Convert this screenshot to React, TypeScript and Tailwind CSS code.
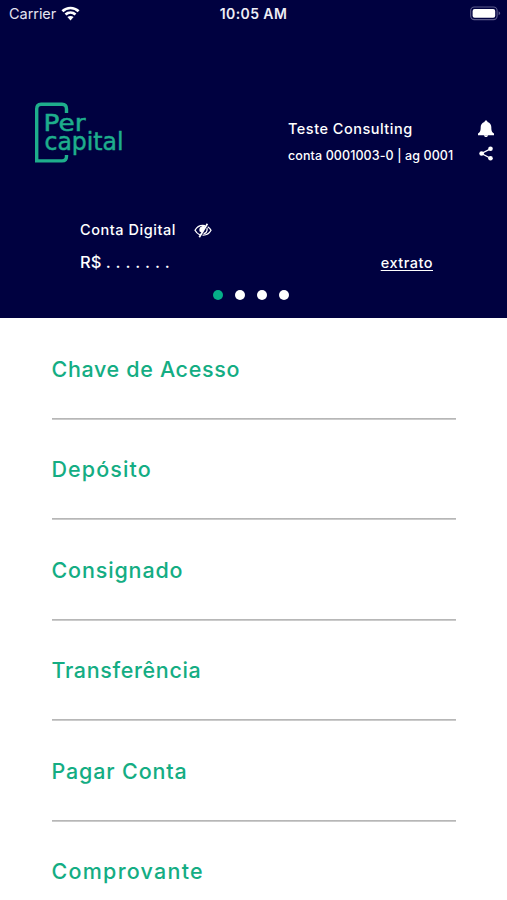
interface MenuItem {
  label: string;
  tracking: string;
}

const menuItems: MenuItem[] = [
  { label: 'Chave de Acesso', tracking: 'tracking-[0.65px]' },
  { label: 'Depósito', tracking: 'tracking-[1.1px]' },
  { label: 'Consignado', tracking: 'tracking-[0.85px]' },
  { label: 'Transferência', tracking: 'tracking-[0.65px]' },
  { label: 'Pagar Conta', tracking: 'tracking-[0.85px]' },
  { label: 'Comprovante', tracking: 'tracking-[1.25px]' },
];

const WifiIcon = () => (
  <svg className="ml-[5px] h-[15px] w-[19px]" viewBox="0 0 18 15" fill="none" stroke="white" strokeWidth={2.7}>
    <path d="M0.9 5.3C5.5 0.9 12.5 0.9 17.1 5.3" />
    <path d="M4 8.6C6.9 5.9 11.1 5.9 14 8.6" />
    <path d="M9 14.4L5.9 11.1C7.7 9.6 10.3 9.6 12.1 11.1Z" fill="white" stroke="none" />
  </svg>
);

const BatteryIcon = () => (
  <svg className="h-[15px] w-[31px]" viewBox="0 0 31 15" fill="none">
    <rect x="0.7" y="1" width="26.4" height="12.6" rx="3.6" stroke="#5c5c8c" strokeWidth={1.1} />
    <rect x="2.6" y="2.9" width="22.6" height="8.8" rx="2" fill="white" />
    <path d="M28.6 5.3C30.8 6.2 30.8 8.4 28.6 9.3Z" fill="#5c5c8c" />
  </svg>
);

const Logo = () => (
  <svg className="h-[62px] w-[92px]" viewBox="0 0 92 62" fill="none">
    <path d="M32.5 11V7Q32.5 2.2 28 2.2H7Q2.7 2.2 2.7 7V58.9H28Q32.5 58.9 32.5 54.5V53" stroke="#1eae8c" strokeWidth={3.4} />
    <g fill="#1eae8c" stroke="#1eae8c" strokeWidth={0.5} fontFamily="'DejaVu Sans', sans-serif">
      <text x="9.5" y="28.7" fontSize="22.5" textLength="42" lengthAdjust="spacingAndGlyphs">Per</text>
      <text x="10.5" y="48" fontSize="24" textLength="79" lengthAdjust="spacingAndGlyphs">capital</text>
    </g>
  </svg>
);

const BellIcon = () => (
  <svg className="h-[18px] w-[18px]" viewBox="0 0 18 18" fill="currentColor">
    <path d="M9 0.5C10 0.5 10.5 1.1 10.5 2C13 2.7 14.3 4.8 14.3 7C14.3 11 15 12.2 17 13.5V15.2H1V13.5C3 12.2 3.7 11 3.7 7C3.7 4.8 5 2.7 7.5 2C7.5 1.1 8 0.5 9 0.5Z" />
    <path d="M6.8 15.2H11.2C10.8 17.6 7.2 17.6 6.8 15.2Z" />
  </svg>
);

const ShareIcon = () => (
  <svg className="h-[15px] w-[14px]" viewBox="0 0 14 15" fill="currentColor" stroke="currentColor">
    <path d="M11.5 2.8L2.5 7.5L11.5 12.3" fill="none" strokeWidth={1.3} />
    <circle cx="11.5" cy="2.8" r="2.3" stroke="none" />
    <circle cx="2.6" cy="7.5" r="2.3" stroke="none" />
    <circle cx="11.5" cy="12.3" r="2.3" stroke="none" />
  </svg>
);

const EyeOffIcon = () => (
  <svg className="h-[15px] w-[18px]" viewBox="0 0 18 15" fill="none" stroke="currentColor" strokeWidth={1.3}>
    <path d="M11 2.7C6.5 1.8 3 3.7 1 7.3C2.2 9.6 3.8 11 5.9 11.8" />
    <path d="M13.7 3.8C15.2 4.7 16.3 5.8 17 7.3C15.2 10.7 12.2 12.4 8.5 12.1" />
    <path d="M10.6 3.2C6.8 2.6 4.5 5.4 5.6 8.4L7.6 9.4L12 3.7Z" fill="currentColor" stroke="none" />
    <path d="M13 5.2C13.7 8 12 10.2 9.6 10.7" />
    <path d="M13.4 0.8L5.3 14.2" strokeWidth={1.7} />
  </svg>
);

const StatusBar = () => (
  <div className="grid h-[27px] grid-cols-3 items-center pl-[9px] pr-[6px]">
    <div className="flex items-center text-[14.5px] text-[#e4e4f0]">
      <span className="tracking-[-0.05px]">Carrier</span>
      <WifiIcon />
    </div>
    <span className="pr-[3px] text-center text-[14px] font-semibold tracking-[0.4px] text-[#eeeef6]">10:05 AM</span>
    <div className="flex justify-end"><BatteryIcon /></div>
  </div>
);

export default function App() {
  return (
    <div className="h-[900px] w-[507px] overflow-hidden bg-white font-['Inter',sans-serif]">
      <header className="flex h-[318px] flex-col bg-[#000140] text-white">
        <StatusBar />

        <div className="mt-[75px] flex h-[64px] pl-[34px] pr-[12px]">
          <Logo />
          <div className="ml-auto flex w-[189px] flex-col pt-[16px] whitespace-nowrap">
            <span className="text-[14.5px] leading-[22px] font-medium tracking-[0.5px]">Teste Consulting</span>
            <span className="mt-[6px] text-[12.5px] leading-[20px] font-medium tracking-[0.1px]">conta 0001003-0 | ag 0001</span>
          </div>
          <div className="flex w-[18px] flex-col items-center gap-[8px] pt-[18px]">
            <BellIcon />
            <ShareIcon />
          </div>
        </div>

        <div className="mt-[54px] flex h-[20px] items-center pl-[80px]">
          <span className="text-[14.5px] font-medium tracking-[0.55px]">Conta Digital</span>
          <span className="ml-[18px]"><EyeOffIcon /></span>
        </div>
        <div className="mt-[9px] flex h-[26px] items-center justify-between pl-[80px] pr-[74px]">
          <span className="text-[16.5px] font-medium">R$ <span className="tracking-[0.3px]">. . . . . . .</span></span>
          <span className="pt-[2px] text-[14.5px] font-medium tracking-[0.5px] underline underline-offset-2">extrato</span>
        </div>

        <div className="mt-[15px] flex justify-center gap-[12px] pr-[5px]">
          <span className="h-[10px] w-[10px] rounded-full bg-[#05ae88]" />
          <span className="h-[10px] w-[10px] rounded-full bg-white" />
          <span className="h-[10px] w-[10px] rounded-full bg-white" />
          <span className="h-[10px] w-[10px] rounded-full bg-white" />
        </div>
      </header>

      <nav className="pt-px pl-[51.5px] pr-[51px]">
        {menuItems.map((item) => (
          <div key={item.label} className="flex h-[100.5px] flex-col">
            <div className={`flex flex-1 items-center pt-[1px] text-[21.5px] font-medium text-[#14ad83] ${item.tracking}`}>
              {item.label}
            </div>
            <div className="h-[2px] bg-linear-to-b from-[#adadad] to-[#d5d5d5]" />
          </div>
        ))}
      </nav>
    </div>
  );
}
